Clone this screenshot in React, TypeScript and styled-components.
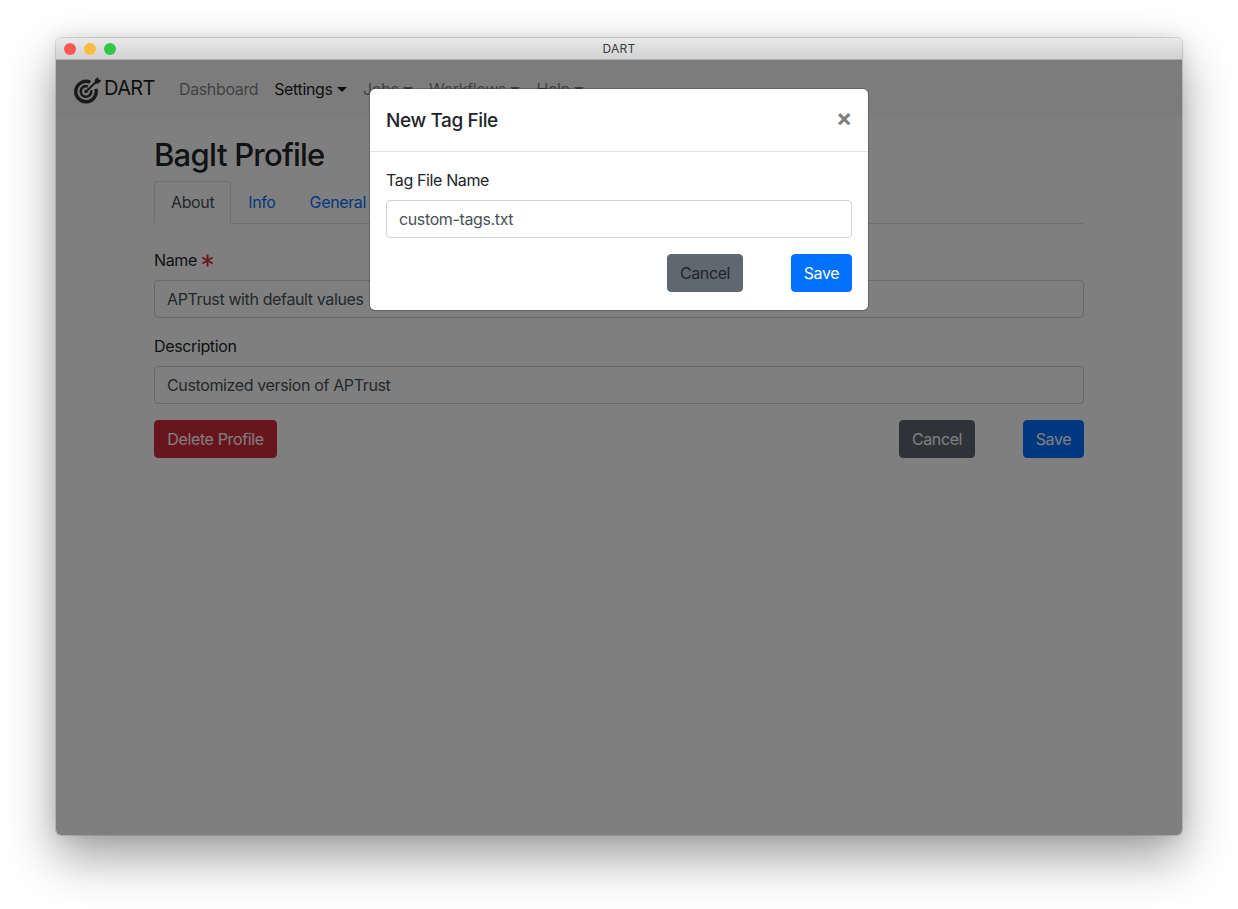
import React from 'react';
import styled, { createGlobalStyle } from 'styled-components';

const GlobalStyle = createGlobalStyle`
  html, body {
    margin: 0;
    padding: 0;
    background: #fff;
  }
  body {
    font-family: Inter, "Liberation Sans", sans-serif;
    font-size: 16px;
    line-height: 24px;
    letter-spacing: -0.37px;
    color: #212529;
  }
`;

const Page = styled.div`
  width: 1238px;
  height: 909px;
  padding: 38px 56px 0;
  box-sizing: border-box;
  overflow: hidden;
`;

const WindowShadow = styled.div`
  border-radius: 5px;
  box-shadow: 0 22px 50px rgba(0, 0, 0, 0.38), 0 0 18px rgba(0, 0, 0, 0.1), 0 0 0 1px rgba(0, 0, 0, 0.12);
  width: 1126px;
  height: 797px;
`;

const Window = styled.div`
  display: flex;
  flex-direction: column;
  width: 1126px;
  height: 797px;
  border-radius: 5px;
  overflow: hidden;
`;

const TitleBar = styled.div`
  flex: none;
  height: 22px;
  box-sizing: border-box;
  padding-top: 1px;
  display: flex;
  align-items: center;
  justify-content: center;
  position: relative;
  background: linear-gradient(#e9e9e9, #d2d2d2);
  border-bottom: 1px solid #adadad;
  font-size: 12px;
  letter-spacing: 0.2px;
  color: #3c3c3c;
`;

const Lights = styled.div`
  position: absolute;
  left: 8px;
  top: 5px;
  display: flex;
  gap: 8px;
`;

const Light = styled.span<{ $color: string }>`
  width: 12px;
  height: 12px;
  border-radius: 50%;
  background: ${p => p.$color};
`;

const Main = styled.div`
  flex: 1;
  position: relative;
  background: #fff;
`;

const Navbar = styled.nav`
  height: 58px;
  box-sizing: border-box;
  background: #f8f9fa;
  display: flex;
  align-items: center;
  padding: 0 16px;
`;

const Brand = styled.div`
  display: flex;
  align-items: center;
  width: 99px;
  font-size: 20px;
  letter-spacing: -0.6px;
  color: rgba(0, 0, 0, 0.9);
  svg {
    margin-right: 2px;
    margin-top: 4px;
  }
  span {
    margin-top: -2px;
  }
`;

const NavItem = styled.a<{ $active?: boolean }>`
  padding: 0 8px;
  white-space: nowrap;
  color: ${p => (p.$active ? 'rgba(0, 0, 0, 0.9)' : 'rgba(0, 0, 0, 0.5)')};
`;

const Caret = styled.i`
  display: inline-block;
  margin-left: 4.5px;
  vertical-align: 3px;
  border-top: 5px solid;
  border-right: 5px solid transparent;
  border-left: 5px solid transparent;
`;

const Content = styled.div`
  padding: 18px 98px 0;
`;

const Heading = styled.h1`
  margin: 0 0 7px;
  font-size: 31px;
  line-height: 38px;
  font-weight: 500;
  letter-spacing: -0.78px;
`;

const Tabs = styled.div`
  display: flex;
  height: 43px;
  box-sizing: border-box;
  border-bottom: 1px solid #dee2e6;
  margin-bottom: 24px;
`;

const Tab = styled.a<{ $active?: boolean }>`
  height: 43px;
  box-sizing: border-box;
  padding: 8px 16px;
  border: 1px solid ${p => (p.$active ? '#dee2e6' : 'transparent')};
  border-bottom-color: ${p => (p.$active ? '#fff' : 'transparent')};
  border-radius: 4px 4px 0 0;
  color: ${p => (p.$active ? '#495057' : '#0070ff')};
`;

const Field = styled.div`
  margin-bottom: 16px;
`;

const Label = styled.label`
  display: flex;
  align-items: center;
  gap: 4px;
  margin-bottom: 8px;
  height: 24px;
`;

const Input = styled.input`
  display: block;
  width: 100%;
  height: 38px;
  box-sizing: border-box;
  padding: 6px 12px;
  border: 1px solid #ced4da;
  border-radius: 4px;
  background: #fff;
  font: inherit;
  letter-spacing: inherit;
  color: #495057;
  outline: none;
`;

const Actions = styled.div`
  display: flex;
  align-items: center;
`;

const Button = styled.button<{ $bg: string; $color?: string; $width: number }>`
  width: ${p => p.$width}px;
  height: 38px;
  padding: 0;
  border: 1px solid ${p => p.$bg};
  border-radius: 4px;
  background: ${p => p.$bg};
  color: ${p => p.$color || '#fff'};
  font: inherit;
  letter-spacing: inherit;
`;

const Spacer = styled.div`
  flex: 1;
`;

const ButtonGap = styled.div`
  width: 48px;
`;

const Backdrop = styled.div`
  position: absolute;
  inset: 0;
  background: rgba(0, 0, 0, 0.5);
  display: flex;
  justify-content: center;
  align-items: flex-start;
  padding-top: 29px;
`;

const Modal = styled.div`
  width: 498px;
  height: 221px;
  box-sizing: border-box;
  background: #fff;
  border-radius: 5px;
  box-shadow: 0 0 0 1px rgba(0, 0, 0, 0.2);
`;

const ModalHeader = styled.div`
  height: 63px;
  box-sizing: border-box;
  display: flex;
  align-items: center;
  justify-content: space-between;
  padding: 0 16px;
  border-bottom: 1px solid #dee2e6;
`;

const ModalTitle = styled.h5`
  margin: 2px 0 0;
  font-size: 19px;
  line-height: 30px;
  font-weight: 500;
  letter-spacing: -0.4px;
`;

const Close = styled.span`
  font-size: 24px;
  line-height: 24px;
  font-weight: 700;
  color: #808080;
  margin-top: -5px;
`;

const ModalBody = styled.div`
  padding: 16px;
`;

const Logo = () => (
  <svg width="30" height="30" viewBox="0 0 30 30" fill="none" stroke="#343434" aria-hidden="true">
    <path d="M18.3 6.3A10.2 10.2 0 1 0 23.85 12.9" strokeWidth="3.4" />
    <path d="M15.8 10.5A5.3 5.3 0 1 0 19.1 14.1" strokeWidth="2.6" />
    <circle cx="14" cy="15.5" r="1.8" fill="#343434" stroke="none" />
    <path d="M14 15.5L25 5" strokeWidth="2" />
    <path d="M22.5 8L23 3.5L26 1L26.6 3.6L29.4 4L27 7.2Z" fill="#343434" stroke="none" />
  </svg>
);

const RequiredMark = () => (
  <svg width="13" height="13" viewBox="0 0 13 13" stroke="#dc2b3f" strokeWidth="2" aria-hidden="true">
    <path d="M6.5 0.5V12.5M1.3 3.5L11.7 9.5M11.7 3.5L1.3 9.5" />
  </svg>
);

const navItems = [
  { label: 'Dashboard' },
  { label: 'Settings', active: true, caret: true },
  { label: 'Jobs', caret: true },
  { label: 'Workflows', caret: true },
  { label: 'Help', caret: true },
];

const App: React.FC = () => (
  <Page>
    <GlobalStyle />
    <WindowShadow>
      <Window>
        <TitleBar>
          <Lights>
            <Light $color="#fc5753" />
            <Light $color="#fdbc40" />
            <Light $color="#33c748" />
          </Lights>
          DART
        </TitleBar>
        <Main>
          <Navbar>
            <Brand>
              <Logo />
              <span>DART</span>
            </Brand>
            {navItems.map(item => (
              <NavItem key={item.label} $active={item.active}>
                {item.label}
                {item.caret && <Caret />}
              </NavItem>
            ))}
          </Navbar>
          <Content>
            <Heading>BagIt Profile</Heading>
            <Tabs>
              <Tab $active>About</Tab>
              <Tab>Info</Tab>
              <Tab>General</Tab>
            </Tabs>
            <Field>
              <Label>
                Name <RequiredMark />
              </Label>
              <Input readOnly value="APTrust with default values" />
            </Field>
            <Field>
              <Label>Description</Label>
              <Input readOnly value="Customized version of APTrust" />
            </Field>
            <Actions>
              <Button $bg="#d02a3c" $width={123}>Delete Profile</Button>
              <Spacer />
              <Button $bg="#5f6770" $width={76}>Cancel</Button>
              <ButtonGap />
              <Button $bg="#0070ff" $width={61}>Save</Button>
            </Actions>
          </Content>
          <Backdrop>
            <Modal>
              <ModalHeader>
                <ModalTitle>New Tag File</ModalTitle>
                <Close>×</Close>
              </ModalHeader>
              <ModalBody>
                <Field>
                  <Label>Tag File Name</Label>
                  <Input readOnly value="custom-tags.txt" />
                </Field>
                <Actions>
                  <Spacer />
                  <Button $bg="#5f6770" $color="#212529" $width={76}>Cancel</Button>
                  <ButtonGap />
                  <Button $bg="#0070ff" $width={61}>Save</Button>
                </Actions>
              </ModalBody>
            </Modal>
          </Backdrop>
        </Main>
      </Window>
    </WindowShadow>
  </Page>
);

export default App;
